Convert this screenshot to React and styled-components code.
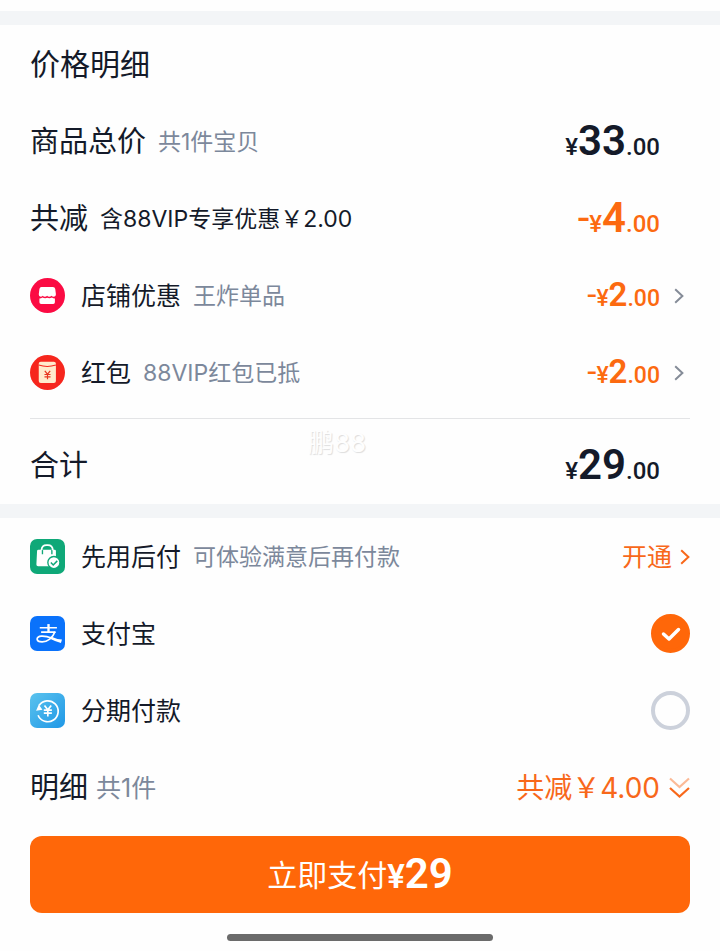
import { useState } from "react";
import styled, { createGlobalStyle } from "styled-components";

const GlobalStyle = createGlobalStyle`
  body {
    margin: 0;
    background: #fefefe;
    color: #141a29;
    font-family: Inter, "Noto Sans CJK SC", sans-serif;
  }
  button, input {
    font-family: inherit;
    margin: 0;
  }
`;

const Page = styled.main`
  padding-top: 11px;
`;
const Band = styled.div`
  height: 14px;
  background: #f3f5f7;
`;
const Section = styled.section`
  position: relative;
  padding: 0 30px;
`;
const Row = styled.div`
  display: flex;
  align-items: center;
  height: 77px;
`;
const Title = styled.h2`
  margin: 0;
  font-size: 30px;
  line-height: 78px;
  font-weight: 400;
`;
const Label = styled.span`
  font-size: ${props => props.$small ? "25px" : "29px"};
  line-height: 40px;
  white-space: nowrap;
`;
const Note = styled.span`
  margin-left: ${props => props.$large ? "8px" : "12px"};
  font-size: ${props => props.$large ? "25px" : "23px"};
  line-height: 40px;
  white-space: nowrap;
  color: ${props => props.$dark ? "#141a29" : "#7c889b"};
`;
const Icon = styled.svg`
  width: 35px;
  height: 35px;
  flex: none;
  margin-right: 16px;
`;
const Divider = styled.hr`
  height: 1px;
  margin: 7px 0 8px;
  border: 0;
  background: #e3e4e6;
`;
const PriceText = styled.span`
  padding-top: ${props => props.$small ? "2px" : "5px"};
  font-family: Roboto, sans-serif;
  font-size: ${props => props.$small ? "23px" : "24px"};
  font-weight: 500;
  line-height: 50px;
  white-space: nowrap;
  color: ${props => props.$accent ? "#fc6a10" : "#141a29"};
`;
const Big = styled.span`
  font-size: ${props => props.$small ? "33px" : "42px"};
  font-weight: 600;
`;
const Minus = styled.span`
  font-size: ${props => props.$small ? "33px" : "42px"};
  font-weight: 400;
`;
const Side = styled.div`
  display: flex;
  align-items: center;
  margin-left: auto;
`;
const Slot = styled.div`
  display: flex;
  width: 30px;
  justify-content: center;
  padding-left: 8px;
  box-sizing: border-box;
`;
const Plain = styled.button`
  display: flex;
  align-items: center;
  gap: 8px;
  margin-left: auto;
  padding: 0;
  border: 0;
  background: none;
  color: #f8681a;
  font-size: ${props => props.$large ? "28px" : "25px"};
  line-height: 40px;
  white-space: nowrap;
  cursor: pointer;
`;
const Watermark = styled.span`
  position: absolute;
  left: 0;
  right: 46px;
  bottom: 44px;
  text-align: center;
  font-size: 26px;
  line-height: 34px;
  color: #fefefe;
  text-shadow: 1px 1px 1px #dedede;
  pointer-events: none;
`;
const PayOption = styled.label`
  display: flex;
  align-items: center;
  height: 77px;
  cursor: pointer;
`;
const RadioBox = styled.span`
  display: grid;
  place-items: center;
  margin-left: auto;
  svg, input {
    grid-area: 1 / 1;
  }
  svg {
    pointer-events: none;
    z-index: 1;
  }
`;
const Radio = styled.input`
  appearance: none;
  width: 39px;
  height: 39px;
  box-sizing: border-box;
  border: 4px solid #ccd1db;
  border-radius: 50%;
  cursor: pointer;
  &:checked {
    border-color: #ff6709;
    background: #ff6709;
  }
`;
const PayButton = styled.button`
  display: flex;
  align-items: center;
  justify-content: center;
  width: 100%;
  height: 77px;
  margin-top: 10px;
  padding: 0;
  border: 0;
  border-radius: 12px;
  background: #ff6709;
  color: #fff;
  font-size: 30px;
  line-height: 50px;
  cursor: pointer;
`;
const PayAmount = styled.span`
  padding-top: 2px;
  font-family: Roboto, sans-serif;
  font-size: 33px;
  font-weight: 600;
`;
const HomeBar = styled.div`
  width: 37%;
  height: 7px;
  margin: 21px auto 10px;
  border-radius: 4px;
  background: #6b6b6b;
`;

// full-width yen sign, used inside Chinese text
const YEN = "\uFFE5";

function Price({ yuan, cents = "00", off, small }) {
  return (
    <PriceText $accent={off} $small={small}>
      {off && <Minus $small={small}>-</Minus>}
      {"\u00A5"}<Big $small={small}>{yuan}</Big>.{cents}
    </PriceText>
  );
}

function Chevron({ color = "#858c98" }) {
  return (
    <svg width="10" height="16" viewBox="0 0 10 16" fill="none" stroke={color} strokeWidth="2">
      <path d="M1.2 1.2 8.4 8l-7.2 6.8" />
    </svg>
  );
}

function DoubleChevron() {
  return (
    <svg width="22" height="22" viewBox="0 0 22 22" fill="none" stroke="#f8681a" strokeWidth="2.2">
      <path d="M2 1.5 11.500 10 21 1.500" opacity=".45" />
      <path d="M2 11l9.500 8.500L21 11" />
    </svg>
  );
}

function ShopIcon() {
  return (
    <Icon viewBox="0 0 104 104">
      <circle cx="52" cy="52" r="52" fill="#fb0b43" />
      <path d="M34 27h34q6 0 7 6l2 15q0 8-6 8-5 0-7-3-3 3-7 3t-6-3q-3 3-7 3t-6-3q-3 3-6 3-6 0-6-8l2-15q1-6 6-6z" fill="#fff" />
      <path d="M28 61q5 0 9-3 7 4 14 1 8 3 14-1 4 3 9 3v11q0 5-5 5H33q-5 0-5-5z" fill="#fff" />
    </Icon>
  );
}

function PacketIcon() {
  return (
    <Icon viewBox="0 0 104 104">
      <circle cx="52" cy="52" r="52" fill="#f6261d" />
      <rect x="26" y="20" width="51" height="63" rx="6" fill="#ffebcd" />
      <path d="M26 30q25 8 51 0" fill="none" stroke="#f6261d" strokeWidth="3" />
      <path d="m44 47 8 10 8-10M52 57v15M43 58h18M43 65h18" fill="none" stroke="#e8361f" strokeWidth="3.500" />
    </Icon>
  );
}

function BagIcon() {
  return (
    <Icon viewBox="0 0 104 104">
      <rect width="104" height="104" rx="21" fill="#0fa878" />
      <path d="M25 32h48q4 0 4 4v45H24q-5 0-5-5l2-40q0-4 4-4z" fill="#fff" />
      <path d="M37 45V33M65 45V33" fill="none" stroke="#0fa878" strokeWidth="4" />
      <path d="M34 33q1-15 15-15h4q14 0 15 15" fill="none" stroke="#fff" strokeWidth="5" />
      <circle cx="71" cy="70" r="18" fill="#fff" stroke="#0fa878" strokeWidth="4" />
      <path d="m62 70 7 7 12-12" fill="none" stroke="#0fa878" strokeWidth="4.500" />
    </Icon>
  );
}

function AlipayIcon() {
  return (
    <Icon viewBox="0 0 104 104">
      <rect width="104" height="104" rx="21" fill="#0a72fb" />
      <g fill="none" stroke="#fff" strokeWidth="5">
        <path d="M29 35h51M33 48h43" />
        <path d="M55 24v24" strokeWidth="7" />
        <path d="M74 47C68 65 52 77 36 77c-19 0-20-16-2-17 15-1 28 5 40 9" />
      </g>
      <path d="M62 61q16 8 33 9l-3 10q-15-3-34-13z" fill="#fff" />
    </Icon>
  );
}

function InstallmentIcon() {
  return (
    <Icon viewBox="0 0 104 104">
      <defs>
        <linearGradient id="installment" x1="0" y1="0" x2="1" y2="1">
          <stop offset="0" stopColor="#5bc3ee" />
          <stop offset="1" stopColor="#1f97e6" />
        </linearGradient>
      </defs>
      <rect width="104" height="104" rx="21" fill="url(#installment)" />
      <g fill="none" stroke="#fff" strokeWidth="5">
        <path d="M27 37a31 31 0 1 1-3 29" />
        <path d="m43 37 10 13 10-13M53 49v21M41 51h24M41 60h24" />
      </g>
      <path d="M18 53 26 34l11 16z" fill="#fff" />
    </Icon>
  );
}

export default function App() {
  const [method, setMethod] = useState("alipay");
  const methods = [
    { id: "alipay", name: "支付宝", icon: <AlipayIcon /> },
    { id: "installment", name: "分期付款", icon: <InstallmentIcon /> },
  ];

  return (
    <>
      <GlobalStyle />
      <Page>
        <Band />
        <Section>
          <Title>价格明细</Title>
          <Row>
            <Label>商品总价</Label>
            <Note>共1件宝贝</Note>
            <Side><Price yuan="33" /><Slot /></Side>
          </Row>
          <Row>
            <Label>共减</Label>
            <Note $dark>含88VIP专享优惠{YEN}2.00</Note>
            <Side><Price yuan="4" off /><Slot /></Side>
          </Row>
          <Row>
            <ShopIcon />
            <Label $small>店铺优惠</Label>
            <Note>王炸单品</Note>
            <Side><Price yuan="2" off small /><Slot><Chevron /></Slot></Side>
          </Row>
          <Row>
            <PacketIcon />
            <Label $small>红包</Label>
            <Note>88VIP红包已抵</Note>
            <Side><Price yuan="2" off small /><Slot><Chevron /></Slot></Side>
          </Row>
          <Divider />
          <Row>
            <Label>合计</Label>
            <Side><Price yuan="29" /><Slot /></Side>
          </Row>
          <Watermark>鹏88</Watermark>
        </Section>
        <Band />
        <Section>
          <Row>
            <BagIcon />
            <Label $small>先用后付</Label>
            <Note>可体验满意后再付款</Note>
            <Plain type="button">开通<Chevron color="#f8681a" /></Plain>
          </Row>
          {methods.map(item => (
            <PayOption key={item.id}>
              {item.icon}
              <Label $small>{item.name}</Label>
              <RadioBox>
                <Radio
                  type="radio"
                  name="method"
                  checked={method === item.id}
                  onChange={() => setMethod(item.id)}
                />
                {method === item.id && (
                  <svg width="20" height="16" viewBox="0 0 20 16" fill="none" stroke="#fff" strokeWidth="3.500" strokeLinecap="round" strokeLinejoin="round">
                    <path d="m2.500 8 5.500 5L17.500 3.500" />
                  </svg>
                )}
              </RadioBox>
            </PayOption>
          ))}
          <Row>
            <Label>明细</Label>
            <Note $large>共1件</Note>
            <Plain type="button" $large>共减{YEN}4.00<DoubleChevron /></Plain>
          </Row>
          <PayButton type="button">
            立即支付<PayAmount>{"\u00A5"}<Big>29</Big></PayAmount>
          </PayButton>
        </Section>
        <HomeBar />
      </Page>
    </>
  );
}
